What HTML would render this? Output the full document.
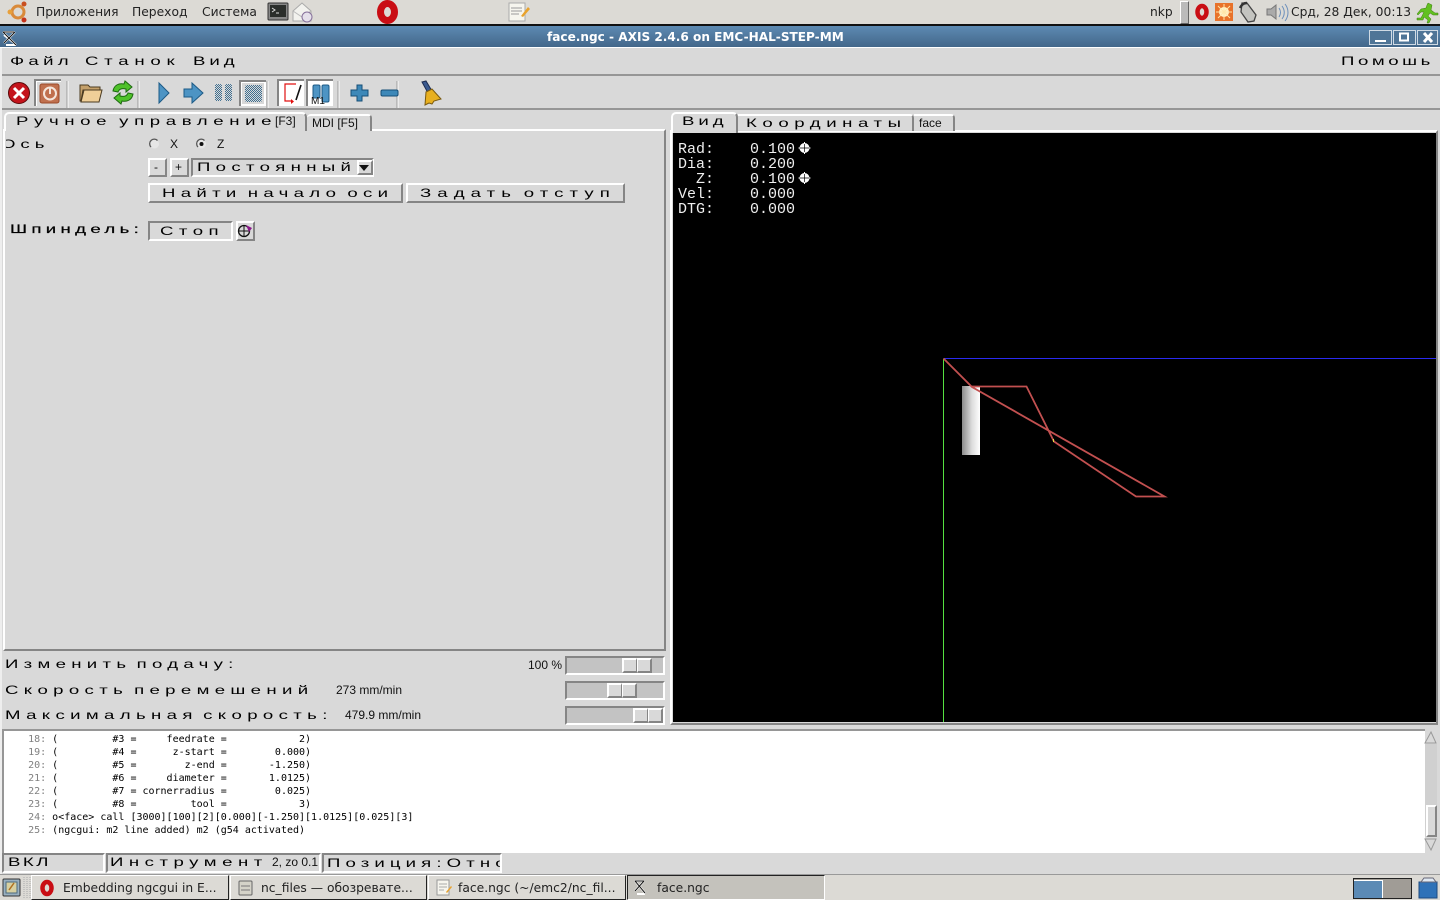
<!DOCTYPE html>
<html lang="ru"><head><meta charset="utf-8"><title>face.ngc - AXIS</title>
<style>
html,body{margin:0;padding:0;width:1440px;height:900px;overflow:hidden;background:#d9d9d9}
div,span{position:absolute;box-sizing:border-box;white-space:pre}
.d{font:12.300px "DejaVu Sans",sans-serif;color:#222;line-height:16px}
.w{font:12px "Liberation Sans",sans-serif;color:#000;line-height:14px;transform:scaleX(1.55);transform-origin:0 0;letter-spacing:3.200px}
.n{font:12px "Liberation Sans",sans-serif;color:#111;line-height:14px}
.r{border:2px solid;border-color:#fff #858585 #858585 #fff;background:#d9d9d9}
.s{border:2px solid;border-color:#858585 #fff #fff #858585;background:#c3c3c3}
.g{border:2px solid;border-color:#858585 #fff #fff #858585;background:#d9d9d9}
.h{font:15px "Liberation Mono",monospace;color:#eee;line-height:15px}
.m{font:10px/13px "DejaVu Sans Mono",monospace;color:#000}
.m b{font-weight:normal;color:#808080}
.tb{background:#dcdad5;border:1px solid;border-color:#fff #222 #222 #fff;height:25px;top:875px;overflow:hidden}
</style></head><body>

<!-- top panel -->
<div style="left:0;top:0;width:1440px;height:25px;background:#dcdad5"></div>
<div style="left:0;top:24px;width:1440px;height:2px;background:#111"></div>
<div class="d" style="left:36px;top:4px">Приложения</div>
<div class="d" style="left:132px;top:4px">Переход</div>
<div class="d" style="left:202px;top:4px">Система</div>
<div class="d" style="left:1150px;top:4px">nkp</div>
<div class="d" style="left:1291px;top:4px">Срд, 28 Дек, 00:13</div>
<div style="left:1180px;top:1px;width:9px;height:23px;background:#bbb;border:1px solid;border-color:#fff #666 #666 #fff"></div>

<!-- title bar -->
<div style="left:0;top:26px;width:1440px;height:21px;background:linear-gradient(#5d8ab3,#43678a)"></div>
<div style="left:0;top:47px;width:1440px;height:1px;background:#fff"></div>
<div style="left:547px;top:29px;font:bold 12.100px/16px 'DejaVu Sans',sans-serif;color:#fff">face.ngc - AXIS 2.4.6 on EMC-HAL-STEP-MM</div>
<div style="left:1369px;top:30px;width:23px;height:15px;background:#4f7597;border:1px solid #d0dbe5"></div>
<div style="left:1393px;top:30px;width:23px;height:15px;background:#4f7597;border:1px solid #d0dbe5"></div>
<div style="left:1417px;top:30px;width:21px;height:15px;background:#4f7597;border:1px solid #d0dbe5"></div>

<!-- window frame -->
<div style="left:0;top:48px;width:2px;height:826px;background:#eee"></div>
<!-- menu -->
<div class="w" style="left:10px;top:54px;letter-spacing:2.770px">Файл</div>
<div class="w" style="left:85px;top:54px;letter-spacing:3.710px">Станок</div>
<div class="w" style="left:193px;top:54px;letter-spacing:2.550px">Вид</div>
<div class="w" style="left:1341px;top:54px;letter-spacing:2.310px">Помошь</div>
<div style="left:2px;top:74px;width:1438px;height:2px;background:#969696"></div>
<div style="left:2px;top:108px;width:1438px;height:2px;background:#969696"></div>

<!-- left notebook -->
<div class="r" style="left:3px;top:129px;width:663px;height:522px"></div>
<div class="r" style="left:4px;top:112px;width:303px;height:19px;border-bottom:0;border-radius:5px 5px 0 0"></div>
<div class="r" style="left:307px;top:114px;width:65px;height:17px;border-bottom:0;border-radius:4px 4px 0 0;border-left:0"></div>
<div style="left:6px;top:129px;width:298px;height:2px;background:#d9d9d9"></div>
<div class="w" style="left:16px;top:114px;letter-spacing:3.630px;word-spacing:-2.420px">Ручное управление</div>
<div class="n" style="left:275px;top:114px">[F3]</div>
<div class="n" style="left:312px;top:116px">MDI [F5]</div>

<div style="left:6px;top:136px;width:40px;height:16px;overflow:hidden"><div class="w" style="left:-5px;top:1px">Ось</div></div>
<div class="n" style="left:170px;top:137px">X</div>
<div class="n" style="left:217px;top:137px">Z</div>

<div class="r" style="left:148px;top:158px;width:19px;height:19px"></div>
<div class="n" style="left:154px;top:160px">-</div>
<div class="r" style="left:170px;top:158px;width:19px;height:19px"></div>
<div class="n" style="left:175px;top:160px">+</div>
<div class="g" style="left:191px;top:158px;width:183px;height:19px"></div>
<div class="w" style="left:197px;top:160px;letter-spacing:3.430px">Постоянный</div>
<div class="r" style="left:357px;top:160px;width:16px;height:15px"></div>

<div class="r" style="left:148px;top:183px;width:255px;height:20px"></div>
<div class="w" style="left:162px;top:186px;letter-spacing:3.420px;word-spacing:-2.760px">Найти начало оси</div>
<div class="r" style="left:406px;top:183px;width:219px;height:20px"></div>
<div class="w" style="left:420px;top:186px;letter-spacing:3.920px;word-spacing:-2.930px">Задать отступ</div>

<div class="w" style="left:10px;top:222px;-webkit-text-stroke:.2px #000;letter-spacing:2.800px">Шпиндель:</div>
<div class="g" style="left:148px;top:221px;width:85px;height:20px"></div>
<div class="w" style="left:160px;top:224px;letter-spacing:3.540px">Стоп</div>
<div class="r" style="left:236px;top:221px;width:19px;height:20px"></div>

<!-- sliders -->
<div class="w" style="left:5px;top:657px;letter-spacing:3.420px;word-spacing:-3.350px">Изменить подачу:</div>
<div class="w" style="left:5px;top:683px;letter-spacing:3.450px;word-spacing:-2.930px">Скорость перемешений</div>
<div class="w" style="left:5px;top:708px;letter-spacing:3.460px;word-spacing:-3.350px">Максимальная скорость:</div>
<div class="n" style="left:528px;top:658px">100 %</div>
<div class="n" style="left:336px;top:683px">273 mm/min</div>
<div class="n" style="left:345px;top:708px">479.9 mm/min</div>
<div class="s" style="left:565px;top:656px;width:100px;height:19px"></div>
<div class="r" style="left:622px;top:658px;width:15px;height:15px;border-right-width:1px"></div>
<div class="r" style="left:637px;top:658px;width:15px;height:15px;border-left-width:1px"></div>
<div class="s" style="left:565px;top:681px;width:100px;height:19px"></div>
<div class="r" style="left:607px;top:683px;width:15px;height:15px;border-right-width:1px"></div>
<div class="r" style="left:622px;top:683px;width:15px;height:15px;border-left-width:1px"></div>
<div class="s" style="left:565px;top:706px;width:100px;height:19px"></div>
<div class="r" style="left:633px;top:708px;width:15px;height:15px;border-right-width:1px"></div>
<div class="r" style="left:648px;top:708px;width:15px;height:15px;border-left-width:1px"></div>

<!-- right notebook -->
<div class="r" style="left:670px;top:130px;width:768px;height:595px"></div>
<div style="left:673px;top:133px;width:763px;height:589px;background:#000"></div>
<div class="r" style="left:671px;top:112px;width:67px;height:21px;border-bottom:0;border-radius:5px 5px 0 0"></div>
<div class="r" style="left:738px;top:114px;width:176px;height:17px;border-bottom:0;border-left:0;border-radius:0 4px 0 0"></div>
<div class="r" style="left:914px;top:114px;width:41px;height:17px;border-bottom:0;border-left:0;border-radius:0 4px 0 0"></div>
<div class="w" style="left:682px;top:114px;letter-spacing:2.550px">Вид</div>
<div class="w" style="left:746px;top:116px;letter-spacing:3.600px">Координаты</div>
<div class="n" style="left:919px;top:116px">face</div>

<div class="h" style="left:678px;top:142px">Rad:</div><div class="h" style="left:750px;top:142px">0.100</div>
<div class="h" style="left:678px;top:157px">Dia:</div><div class="h" style="left:750px;top:157px">0.200</div>
<div class="h" style="left:696px;top:172px">Z:</div><div class="h" style="left:750px;top:172px">0.100</div>
<div class="h" style="left:678px;top:187px">Vel:</div><div class="h" style="left:750px;top:187px">0.000</div>
<div class="h" style="left:678px;top:202px">DTG:</div><div class="h" style="left:750px;top:202px">0.000</div>

<!-- cylinder -->
<div style="left:962px;top:386px;width:18px;height:69px;background:linear-gradient(90deg,#8c8c8c,#dcdcdc 55%,#fff)"></div>

<!-- log -->
<div style="left:2px;top:729px;width:1424px;height:124px;background:#fff;border:solid #969696;border-width:2px 0 0 2px"></div>
<div class="m" style="left:4px;top:733px"><b>    18: </b>(         #3 =     feedrate =            2)
<b>    19: </b>(         #4 =      z-start =        0.000)
<b>    20: </b>(         #5 =        z-end =       -1.250)
<b>    21: </b>(         #6 =     diameter =       1.0125)
<b>    22: </b>(         #7 = cornerradius =        0.025)
<b>    23: </b>(         #8 =         tool =            3)
<b>    24: </b>o&lt;face&gt; call [3000][100][2][0.000][-1.250][1.0125][0.025][3]
<b>    25: </b>(ngcgui: m2 line added) m2 (g54 activated)</div>
<div style="left:1425px;top:729px;width:15px;height:124px;background:#d9d9d9"></div>
<div style="left:1425px;top:744px;width:12px;height:93px;background:#d0d0d0"></div>
<div class="r" style="left:1426px;top:805px;width:11px;height:32px"></div>

<!-- status -->
<div class="g" style="left:2px;top:853px;width:103px;height:20px"></div>
<div class="g" style="left:106px;top:853px;width:215px;height:20px"></div>
<div class="g" style="left:322px;top:853px;width:180px;height:20px;overflow:hidden"><div class="w" style="left:3px;top:1px;letter-spacing:3.300px">Позиция:Относительная</div></div>
<div class="w" style="left:8px;top:855px;letter-spacing:1.600px">ВКЛ</div>
<div class="w" style="left:110px;top:855px;letter-spacing:3.560px">Инструмент</div>
<div class="n" style="left:272px;top:855px">2, zo 0.1</div>

<!-- taskbar -->
<div style="left:0;top:874px;width:1440px;height:26px;background:#dcdad5;border-top:1px solid #999"></div>
<div class="tb" style="left:31px;width:198px"><div class="d" style="left:31px;top:4px">Embedding ngcgui in E...</div></div>
<div class="tb" style="left:230px;width:197px"><div class="d" style="left:30px;top:4px">nc_files — обозревате...</div></div>
<div class="tb" style="left:428px;width:198px"><div class="d" style="left:29px;top:4px">face.ngc (~/emc2/nc_fil...</div></div>
<div class="tb" style="left:627px;width:198px;background:#c4c2bc;border-color:#222 #fff #fff #222"><div class="d" style="left:29px;top:4px">face.ngc</div></div>
<div style="left:1353px;top:878px;width:59px;height:21px;background:#a09c96;border:1px solid #222"></div>
<div style="left:1354px;top:880px;width:29px;height:18px;background:#5b8ab5;border:1px solid #fff;border-width:1px 1px 0 0"></div>

<!-- graphics -->
<svg style="position:absolute;left:0;top:0" width="1440" height="900" viewBox="0 0 1440 900" fill="none">
<!-- ubuntu logo -->
<circle cx="18" cy="12" r="6" stroke="#d98a3a" stroke-width="3"/><circle cx="24" cy="4" r="2.500" fill="#c94f1f"/><circle cx="10" cy="12" r="2.500" fill="#e8a03a"/><circle cx="24" cy="20" r="2.500" fill="#c4331b"/>
<!-- terminal -->
<rect x="268" y="3" width="20" height="17" rx="1" fill="#888" stroke="#333"/><rect x="270" y="5" width="16" height="12" fill="#2b2e2b"/><path d="M272 8l3 2-3 2M276 13h3" stroke="#ddd"/>
<!-- mail -->
<path d="M293 11l9-8 9 8v10h-18z" fill="#f2f2ee" stroke="#aaa"/><path d="M293 11l9 6 9-6" stroke="#bbb"/><circle cx="307" cy="17" r="5" fill="#e5e0ea" stroke="#86709a"/>
<!-- opera -->
<ellipse cx="387.500" cy="12" rx="7" ry="8.500" stroke="#c90d14" stroke-width="7"/>
<!-- notes -->
<rect x="509" y="3" width="16" height="18" fill="#f6f5ee" stroke="#aaa"/><path d="M511 8h11M511 11h11M511 14h8" stroke="#999"/><path d="M521 16l7-9 2 2-7 8z" fill="#e8a22c"/>
<!-- tray -->
<ellipse cx="1202" cy="12" rx="4.500" ry="6" stroke="#c90d14" stroke-width="4.500"/>
<rect x="1215" y="3" width="18" height="18" fill="#e8722a"/><circle cx="1224" cy="12" r="5" fill="#fff2c8"/><path d="M1224 4v16M1216 12h16M1218 6l12 12M1230 6l-12 12" stroke="#ffe6a8"/>
<path d="M1242 3l5 0 9 12-2 6-6 1-7-10z" fill="#c4c4c0" stroke="#444" stroke-width="1.300"/><path d="M1240 8c2-4 4-5 7-5" stroke="#333" stroke-width="2.500"/>
<path d="M1267 9h4l5-4v14l-5-4h-4z" fill="#aaa" stroke="#777"/><path d="M1279 8c2 3 2 6 0 9M1282 6c3 4 3 9 0 13M1285 4c4 5 4 12 0 17" stroke="#6c8fbb"/>
<path d="M1428 3l4 2-1 5 4 3h3l0 2-5 0-3-2-2 3 3 3-2 4h-2l1-3-4-3-1 3h-6v-2h4l3-6-3 0-3 3-1-1 4-5 5-1 1-3z" fill="#62c020" stroke="#3d7a10" stroke-width=".5"/>
<!-- titlebar icon -->
<path d="M3 32h11M3 32l13 13M15 32L4 43M6 45h10M4 35l10 8" stroke="#fff" stroke-width="2"/><path d="M3 32h11M3 32l13 13M15 32L4 43" stroke="#111"/>
<!-- wm controls -->
<rect x="1375" y="40" width="11" height="2" fill="#fff"/><rect x="1400" y="33.500" width="8" height="7" stroke="#fff" stroke-width="2"/>
<path d="M1424 33l8 9M1432 33l-8 9" stroke="#fff" stroke-width="3"/>
<!-- toolbar -->
<circle cx="19" cy="93" r="10.500" fill="#c4141c" stroke="#5a0808"/><path d="M14 88l10 10M24 88l-10 10" stroke="#fff" stroke-width="3"/>
<rect x="35" y="80" width="26" height="26" fill="#fff"/><rect x="37" y="82" width="24" height="24" fill="#d9d9d9"/><path d="M35 106V80h26" stroke="#858585" stroke-width="2"/><rect x="40" y="84" width="19" height="19" rx="2" fill="#c0704e" stroke="#9a4a2a"/><circle cx="50" cy="93.500" r="6" stroke="#f4e6dc" stroke-width="2"/><path d="M50 88v6" stroke="#f4e6dc" stroke-width="2"/>
<path d="M67 81v27M138 81v27M267 81v27M338 81v27M397 81v27" stroke="#9c9c9c"/><path d="M68 81v27M139 81v27M268 81v27M339 81v27M398 81v27" stroke="#fff"/>
<path d="M80 101V85h8l2 2h10v3H83l-2 11z" fill="#c4a06a" stroke="#4a3a20"/><path d="M81 102l3-12h18l-3 12z" fill="#f0cf98" stroke="#4a3a20"/>
<path d="M113 91c1-6 6-8 11-7l1-3 7 6-6 5 0-3c-4-1-7 0-8 3z" fill="#4fc22a" stroke="#1d6a10"/><path d="M133 94c-1 6-6 8-11 7l-1 3-7-6 6-5 0 3c4 1 7 0 8-3z" fill="#4fc22a" stroke="#1d6a10"/>
<path d="M159 83l10 10-10 10z" fill="#4d94c4" stroke="#1c5a86"/>
<path d="M184 89h8v-6l11 10-11 10v-6h-8z" fill="#4d94c4" stroke="#1c5a86"/>
<defs><pattern id="p" width="2" height="2" patternUnits="userSpaceOnUse"><rect width="2" height="2" fill="#d9d9d9"/><rect width="1" height="1" fill="#3f6f90"/><rect x="1" y="1" width="1" height="1" fill="#3f6f90"/></pattern></defs>
<rect x="215" y="84" width="7" height="17" rx="2" fill="url(#p)"/><rect x="225" y="84" width="7" height="17" rx="2" fill="url(#p)"/>
<rect x="240" y="81" width="26" height="25" fill="#fff"/><rect x="242" y="83" width="22" height="21" fill="#d9d9d9"/><path d="M240 106V81h26" stroke="#858585" stroke-width="2"/><rect x="245" y="85" width="17" height="17" rx="2" fill="url(#p)"/>
<rect x="278" y="80" width="26" height="26" fill="#fff"/><path d="M278 106V80h26" stroke="#858585" stroke-width="2"/>
<path d="M296 84h-11v17h7" stroke="#e01010" stroke-width="1.200"/><path d="M291 99v5l3-2.500z" fill="#e01010"/><path d="M296 100l5-15" stroke="#111" stroke-width="1.600"/>
<rect x="307" y="80" width="26" height="26" fill="#fff"/><path d="M307 106V80h26" stroke="#858585" stroke-width="2"/>
<rect x="313" y="85" width="7" height="13" rx="1.500" fill="#4d94c4" stroke="#1c5a86"/><rect x="322" y="85" width="7" height="17" rx="1.500" fill="#4d94c4" stroke="#1c5a86"/>
<text x="311" y="104" font-family="Liberation Sans" font-size="10" fill="#111">M1</text>
<path d="M357 85h5v5h6v6h-6v5h-5v-5h-6v-6h6z" fill="#3d88b8" stroke="#174f78"/>
<rect x="381" y="90" width="17" height="6" rx="1.500" fill="#3d88b8" stroke="#174f78"/>
<path d="M422 82l4-1 6 10-4 2z" fill="#3a5a90" stroke="#1c2c50"/><path d="M426 92l6-3 9 10-7 2-2 3-3-1-4 2z" fill="#e8b020" stroke="#7a5a10"/>
<!-- radios -->
<circle cx="154.500" cy="144" r="4.500" fill="#e6e6e6"/><path d="M151 147a4.500 4.500 0 0 1 6.500-6.500" stroke="#555" stroke-width="1.300"/><circle cx="201.500" cy="144" r="4.500" fill="#e6e6e6"/><path d="M198 147a4.500 4.500 0 0 1 6.500-6.500" stroke="#555" stroke-width="1.300"/><circle cx="201.500" cy="144" r="2" fill="#111"/>
<path d="M359 165h10l-5 6z" fill="#111"/>
<!-- spindle icon -->
<circle cx="244" cy="231" r="5.500" stroke="#111" stroke-width="1.300"/><path d="M244 225v12M238 231h11" stroke="#111"/><path d="M246 225l6 3-3 4z" fill="#8a1a8a"/>
<!-- HUD markers -->
<g stroke="#fff"><circle cx="804.500" cy="148" r="4.500" fill="#fff"/><path d="M804.500 142v12M798.500 148h12"/></g>
<g stroke="#fff"><circle cx="804.500" cy="178" r="4.500" fill="#fff"/><path d="M804.500 172v12M798.500 178h12"/></g>
<path d="M800 148h9M804.500 144v8M800 178h9M804.500 174v8" stroke="#000" stroke-width=".7"/>
<!-- plot -->
<path d="M943.500 358.500V722" stroke="#55e040"/>
<path d="M944 358.500H1436" stroke="#2a2af0"/>
<path d="M943.500 358.500L972 387 1164.500 496.500H1136L1054 441.500 1026.500 386.500H972" stroke="#c25050" stroke-width="1.800"/>
<path d="M1053.500 439v3" stroke="#e0e040"/>
<!-- scrollbar arrows -->
<path d="M1431 732l5 11h-11z" fill="#d9d9d9" stroke="#999"/><path d="M1431 850l5-11h-11z" fill="#d9d9d9" stroke="#999"/>
<!-- taskbar icons -->
<rect x="3" y="879" width="17" height="17" rx="1" fill="#9ab0c0" stroke="#333"/><rect x="6" y="882" width="11" height="11" fill="#d8d0a0" stroke="#4a6a80"/><path d="M14 883l-5 7" stroke="#b07020" stroke-width="1.500"/>
<path d="M24 877v21M27 877v21M30 877v21" stroke="#aaa" stroke-dasharray="1 1"/>
<ellipse cx="47" cy="888" rx="4.500" ry="6" stroke="#c90d14" stroke-width="4.500"/>
<rect x="239" y="881" width="13" height="14" rx="1" fill="#d4d2c8" stroke="#666"/><path d="M241 886h9M241 890h9" stroke="#777"/>
<rect x="437" y="880" width="12" height="15" fill="#f6f5ee" stroke="#999"/><path d="M439 884h8M439 887h8M439 890h5" stroke="#aaa"/><path d="M446 892l5-6 1 1-5 6z" fill="#e8a22c"/>
<path d="M635 881h9M635 881l10 12M644 881l-9 10M637 894h8" stroke="#fff" stroke-width="2"/><path d="M635 881h9M635 881l10 12M644 881l-9 10" stroke="#111"/>
<path d="M1419 882h18v16h-18z" fill="#2f72b8" stroke="#1d4a80"/><path d="M1421 882l3-4h9l3 4z" fill="#dfe8f2" stroke="#667"/>
</svg>
</body></html>
